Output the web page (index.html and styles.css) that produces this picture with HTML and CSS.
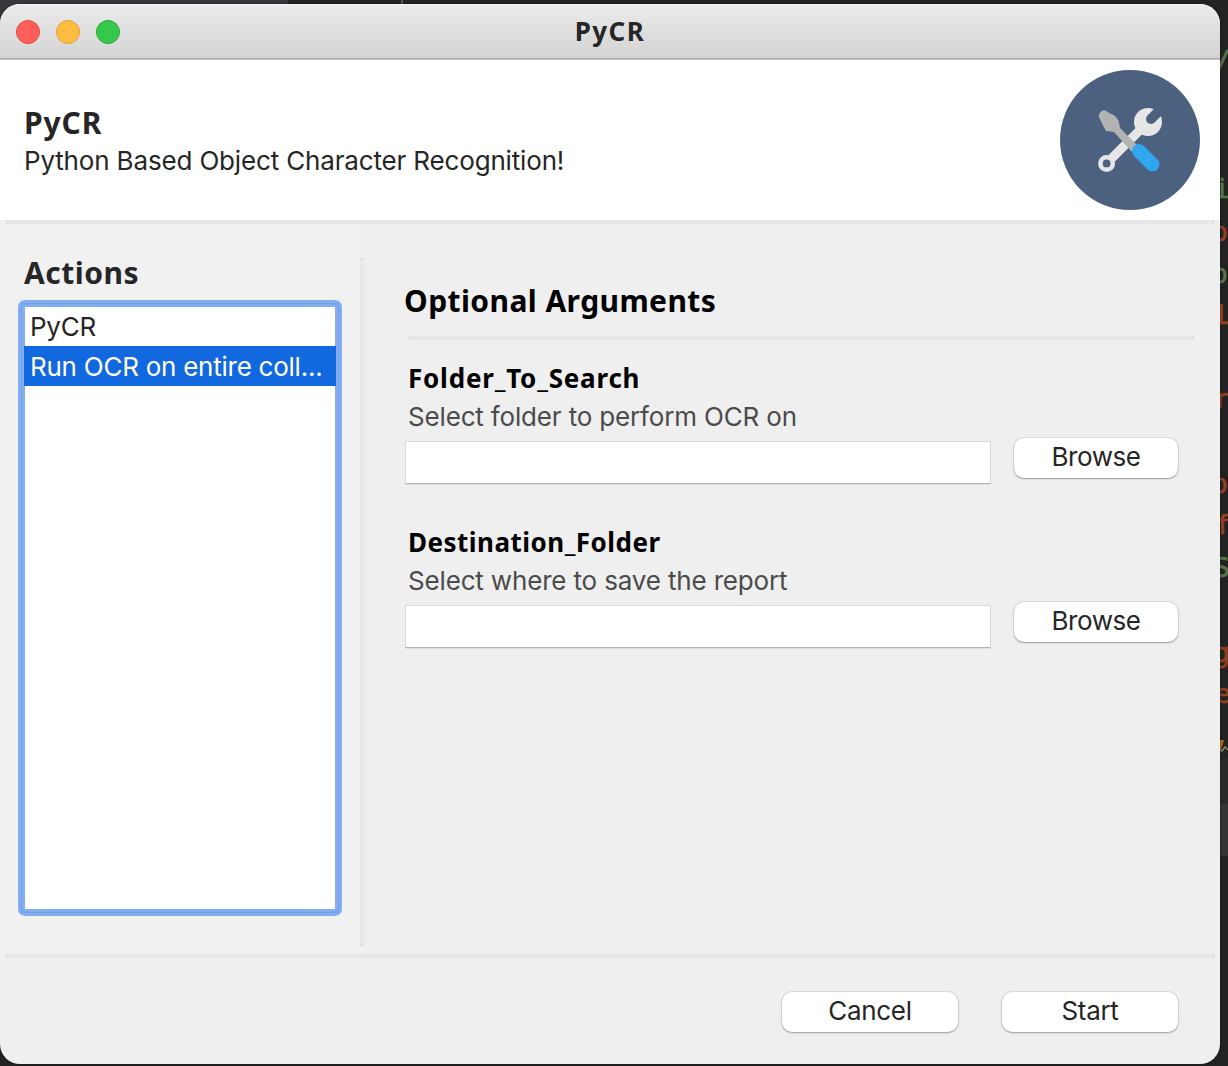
FILE: index.html
```html
<!DOCTYPE html>
<html lang="en">
<head>
<meta charset="utf-8">
<title>PyCR</title>
<link rel="stylesheet" href="styles.css">
</head>
<body>
<div class="desktop">
  <div class="editor" aria-hidden="true">
    <div class="strip strip-top"></div>
    <div class="strip strip-line"></div>
    <div class="strip strip-low"></div>
    <div class="strip strip-bar"></div>
    <span class="code green" style="left:1215px;top:46px">/</span>
    <span class="code green" style="left:1214px;top:174px">i</span>
    <span class="code red" style="left:1212px;top:217px">p</span>
    <span class="code green" style="left:1212px;top:259px">p</span>
    <span class="code red" style="left:1217px;top:300px">L</span>
    <span class="code red" style="left:1214px;top:384px">r</span>
    <span class="code red" style="left:1212px;top:469px">p</span>
    <span class="code red" style="left:1215px;top:510px">f</span>
    <span class="code green" style="left:1214px;top:553px">S</span>
    <span class="code red" style="left:1214px;top:638px">g</span>
    <span class="code red" style="left:1215px;top:679px">e</span>
    <svg class="squiggle" width="8" height="14" viewBox="0 0 8 14"><path d="M0 0h4L1 10H0z" fill="#b5651d"/><path d="M0 10l2 1 3-4 3 3" fill="none" stroke="#7d8a5c" stroke-width="1.5"/></svg>
  </div>
  <main class="window">
    <div class="titlebar">
      <div class="lights"><i class="light close"></i><i class="light minimize"></i><i class="light expand"></i></div>
      <span class="title">PyCR</span>
    </div>
    <header class="header">
      <div>
        <h1 class="heading app-name">PyCR</h1>
        <p class="text subtitle">Python Based Object Character Recognition!</p>
      </div>
      <svg class="logo" width="140" height="140" viewBox="0 0 140 140">
        <circle cx="70" cy="70" r="70" fill="#4c6080"/>
        <path d="M51.500 88.500L82 58" stroke="#e6e6e6" stroke-width="9"/>
        <circle cx="46.600" cy="93.400" r="6.200" fill="none" stroke="#e6e6e6" stroke-width="4.600"/>
        <circle cx="88" cy="52" r="14" fill="#e6e6e6"/>
        <path d="M91 49L102 38" stroke="#4c6080" stroke-width="10" stroke-linecap="round"/>
        <path d="M44 40L55 46Q59 49 60 58L78 76L72 82L54 62L46 61Q44 58 38.500 46Q40 41 44 40Z" fill="#b3b3b3"/>
        <path d="M79 81L92.500 94.500" stroke="#2fa6ee" stroke-width="14" stroke-linecap="round"/>
      </svg>
    </header>
    <hr class="rule">
    <div class="body">
      <aside class="sidebar">
        <h2 class="heading actions">Actions</h2>
        <ul class="list">
          <li class="text item">PyCR</li>
          <li class="text item selected">Run OCR on entire coll...</li>
        </ul>
      </aside>
      <div class="divider"></div>
      <section class="content">
        <h2 class="heading group">Optional Arguments</h2>
        <hr class="rule group-rule">
        <div class="field">
          <h3 class="label folder">Folder_To_Search</h3>
          <p class="text help">Select folder to perform OCR on</p>
          <div class="picker"><input class="input" type="text" aria-label="Folder_To_Search"><button class="text button browse">Browse</button></div>
        </div>
        <div class="field">
          <h3 class="label destination">Destination_Folder</h3>
          <p class="text help">Select where to save the report</p>
          <div class="picker"><input class="input" type="text" aria-label="Destination_Folder"><button class="text button browse">Browse</button></div>
        </div>
      </section>
    </div>
    <hr class="rule">
    <footer class="footer">
      <button class="text button">Cancel</button>
      <button class="text button">Start</button>
    </footer>
  </main>
</div>
</body>
</html>
```
FILE: styles.css
```css
* { box-sizing: border-box; }
body { margin: 0; overflow: hidden; }
h1, h2, h3, p, ul, hr { margin: 0; padding: 0; border: 0; list-style: none; }

.desktop {
  position: relative;
  width: 1228px;
  height: 1066px;
  padding-top: 4px;
  background: #222;
  overflow: hidden;
}
.editor { position: absolute; inset: 0; }
.strip { position: absolute; }
.strip-top { left: 0; top: 0; width: 288px; height: 30px; background: #35393c; }
.strip-line { left: 401px; top: 0; width: 2px; height: 4px; background: #555; }
.strip-low { right: 0; top: 758px; width: 30px; height: 46px; background: #292929; }
.strip-bar { right: 0; top: 804px; width: 30px; height: 52px; background: #323435; }
.code { position: absolute; font: 26px/30px "DejaVu Sans Mono", monospace; -webkit-text-stroke: .6px; }
.green { color: #58754a; }
.red { color: #94401f; }
.squiggle { position: absolute; left: 1220px; top: 740px; }

.window {
  position: relative;
  display: flex;
  flex-direction: column;
  width: 1220px;
  height: 1060px;
  border-radius: 20px;
  background: #efefef;
  overflow: hidden;
  box-shadow: 0 0 2px rgba(0, 0, 0, .6);
}
.titlebar {
  display: grid;
  grid-template-columns: 1fr auto 1fr;
  align-items: center;
  height: 56px;
  padding: 1px 16px 0;
  border-bottom: 1px solid #c6c6c6;
  background: linear-gradient(#ebebeb, #d3d3d3);
  box-shadow: inset 0 1px #f6f6f6, inset 0 -1px #adadad;
}
.lights { display: flex; gap: 16px; }
.light { width: 24px; height: 24px; border-radius: 50%; border: 1px solid; }
.close { background: #fe5f58; border-color: #e2463f; }
.minimize { background: #febc40; border-color: #e0a033; }
.expand { background: #35c84a; border-color: #27aa35; }
.title, .heading, .label { font-family: "Noto Sans", "Open Sans", sans-serif; font-weight: 700; white-space: nowrap; }
.title { margin: -2px 0 0 0; font-size: 26px; line-height: 36px; letter-spacing: 1.4px; color: #262626; }
.text { font-family: Inter, "Liberation Sans", sans-serif; font-size: 26px; line-height: 32px; letter-spacing: -.16px; color: #262626; white-space: nowrap; }

.header {
  display: flex;
  justify-content: space-between;
  height: 160px;
  padding: 10px 20px 10px 24px;
  background: #fff;
}
.heading { font-size: 30px; line-height: 40px; color: #262626; }
.app-name { margin-top: 33px; letter-spacing: .9px; }
.subtitle { margin-top: 2px; }

.rule { flex: none; height: 4px; margin: 0 6px; background: #e7e7e7; border: solid #dadada; border-width: 0 1px; }
.body { display: flex; height: 730px; }
.sidebar { width: 360px; padding: 29px 18px 0; background: #f1f1f1; }
.actions { margin-left: 6px; letter-spacing: .5px; }
.list {
  height: 616px;
  margin-top: 7px;
  border: 6px solid #82adf1;
  border-radius: 7px;
  background: #fff;
  box-shadow: inset 1px 0 #82adf1, inset -1px 0 #82adf1, inset 0 1px #82adf1, inset 0 -1px #82adf1;
  outline: 1px solid #74a0e6;
  outline-offset: -4px;
}
.item { height: 40px; padding: 5px 6px; letter-spacing: -.25px; }
.selected { background: #1268df; color: #fff; }
.divider { width: 4px; margin: 34px 0 8px; background: #e7e7e7; border: solid #dcdcdc; border-width: 1px 0; }

.content { flex: 1; padding: 57px 26px 0 41px; }
.group { margin-left: -1px; color: #000; letter-spacing: .42px; }
.group-rule { margin: 15px 0 0 4px; }
.field { padding-top: 20px; height: 164px; }
.label { margin-left: 3px; font-size: 26px; line-height: 36px; color: #000; }
.folder { letter-spacing: .8px; }
.destination { letter-spacing: .48px; }
.help { margin-left: 3px; margin-top: 5px; color: #4b4b4b; }
.picker { display: flex; gap: 23px; margin-top: 5px; }
.input {
  width: 586px;
  height: 43px;
  margin-top: 3px;
  border: 1px solid #d9d9d9;
  border-bottom-color: #b4b4b4;
  background: #fff;
  box-shadow: 0 1px #dedede;
}
.button {
  width: 176px;
  height: 40px;
  padding: 0 0 2px;
  border: 0;
  border-radius: 10px;
  background: #fff;
  letter-spacing: -.3px;
  box-shadow: 0 0 0 1px rgba(0, 0, 0, .07), 0 1px 2px rgba(0, 0, 0, .3);
}
.browse { width: 164px; letter-spacing: -.45px; }
.footer { display: flex; justify-content: flex-end; gap: 44px; padding: 34px 42px 0 0; }
```
